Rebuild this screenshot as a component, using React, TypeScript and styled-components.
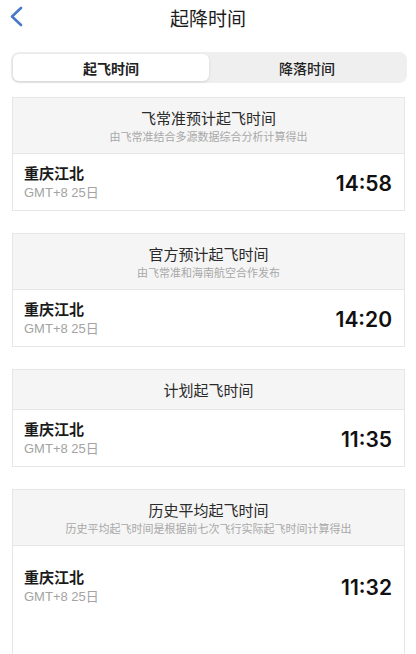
import React, { FunctionComponent } from 'react';
import styled, { createGlobalStyle } from 'styled-components';

const colours = {
  blue: '#4a78c8',
  text: '#222',
  subText: '#a8a8a8',
  border: '#e6e6e6',
  headerBg: '#f5f5f5',
  segmentBg: '#efefef',
};

const GlobalStyle = createGlobalStyle`
  body {
    margin: 0;
    background: #fff;
    font-family: "Liberation Sans", "Noto Sans CJK SC", sans-serif;
    color: ${colours.text};
  }
`;

const Page = styled.div`
  width: 416px;
  height: 654px;
  overflow: hidden;
  background: #fff;
`;

const NavBar = styled.div`
  display: grid;
  grid-template-columns: 48px 1fr 48px;
  align-items: center;
  height: 34px;
`;

const BackButton = styled.div`
  display: flex;
  align-items: center;
  padding-left: 9px;
  height: 34px;
`;

const NavTitle = styled.div`
  text-align: center;
  font-size: 19px;
  color: #1c1c1c;
`;

const Segmented = styled.div`
  display: grid;
  grid-template-columns: 1fr 1fr;
  margin: 18px 9px 0 11px;
  padding: 2px;
  height: 27px;
  background: ${colours.segmentBg};
  border-radius: 8px;
`;

const Segment = styled.div<{ active?: boolean }>`
  display: flex;
  align-items: center;
  justify-content: center;
  font-size: 14px;
  font-weight: ${props => props.active ? 600 : 500};
  color: #222;
  background: ${props => props.active ? '#fff' : 'transparent'};
  border-radius: 6px;
  box-shadow: ${props => props.active ? '0 1px 3px rgba(0,0,0,0.12)' : 'none'};
`;

const CardList = styled.div`
  display: flex;
  flex-direction: column;
  gap: 22px;
  margin: 14px 11px 0 12px;
`;

const Card = styled.div`
  border: 1px solid ${colours.border};
  background: #fff;
`;

const CardHeader = styled.div`
  background: ${colours.headerBg};
  border-bottom: 1px solid ${colours.border};
  padding: 11px 8px 8px;
  text-align: center;
`;

const CardTitle = styled.div`
  font-size: 15px;
  line-height: 20px;
  color: #2a2a2a;
`;

const CardSubtitle = styled.div`
  font-size: 11px;
  line-height: 16px;
  color: ${colours.subText};
`;

const CardBody = styled.div<{ tall?: boolean }>`
  display: flex;
  align-items: center;
  justify-content: space-between;
  padding: ${props => props.tall ? '22px 12px 80px 11px' : '10px 12px 8px 11px'};
`;

const Airport = styled.div`
  display: flex;
  flex-direction: column;
`;

const AirportName = styled.div`
  font-size: 15px;
  line-height: 20px;
  font-weight: 700;
  color: #1a1a1a;
`;

const AirportZone = styled.div`
  font-size: 13px;
  line-height: 18px;
  color: #a3a3a3;
`;

const Time = styled.div`
  font-family: Inter, "Liberation Sans", sans-serif;
  font-size: 21px;
  font-weight: 600;
  color: #111;
`;

const BackIcon = () => (
  <svg width="16" height="22" viewBox="0 0 16 22">
    <polyline points="12,2 3,10.5 12,19" fill="none" stroke={colours.blue} strokeWidth="2.6" strokeLinecap="round" strokeLinejoin="round" />
  </svg>
);

type TimeCard = { title: string; subtitle?: string; time: string; tall?: boolean };

const cards: TimeCard[] = [
  { title: '飞常准预计起飞时间', subtitle: '由飞常准结合多源数据综合分析计算得出', time: '14:58' },
  { title: '官方预计起飞时间', subtitle: '由飞常准和海南航空合作发布', time: '14:20' },
  { title: '计划起飞时间', time: '11:35' },
  { title: '历史平均起飞时间', subtitle: '历史平均起飞时间是根据前七次飞行实际起飞时间计算得出', time: '11:32', tall: true },
];

const TimeCardView: FunctionComponent<{ card: TimeCard }> = ({ card }) => (
  <Card>
    <CardHeader>
      <CardTitle>{card.title}</CardTitle>
      {card.subtitle && <CardSubtitle>{card.subtitle}</CardSubtitle>}
    </CardHeader>
    <CardBody tall={card.tall}>
      <Airport>
        <AirportName>重庆江北</AirportName>
        <AirportZone>GMT+8 25日</AirportZone>
      </Airport>
      <Time>{card.time}</Time>
    </CardBody>
  </Card>
);

const App = () => (
  <Page>
    <GlobalStyle />
    <NavBar>
      <BackButton><BackIcon /></BackButton>
      <NavTitle>起降时间</NavTitle>
      <div />
    </NavBar>
    <Segmented>
      <Segment active>起飞时间</Segment>
      <Segment>降落时间</Segment>
    </Segmented>
    <CardList>
      {cards.map(card => <TimeCardView key={card.title} card={card} />)}
    </CardList>
  </Page>
);

export default App;
